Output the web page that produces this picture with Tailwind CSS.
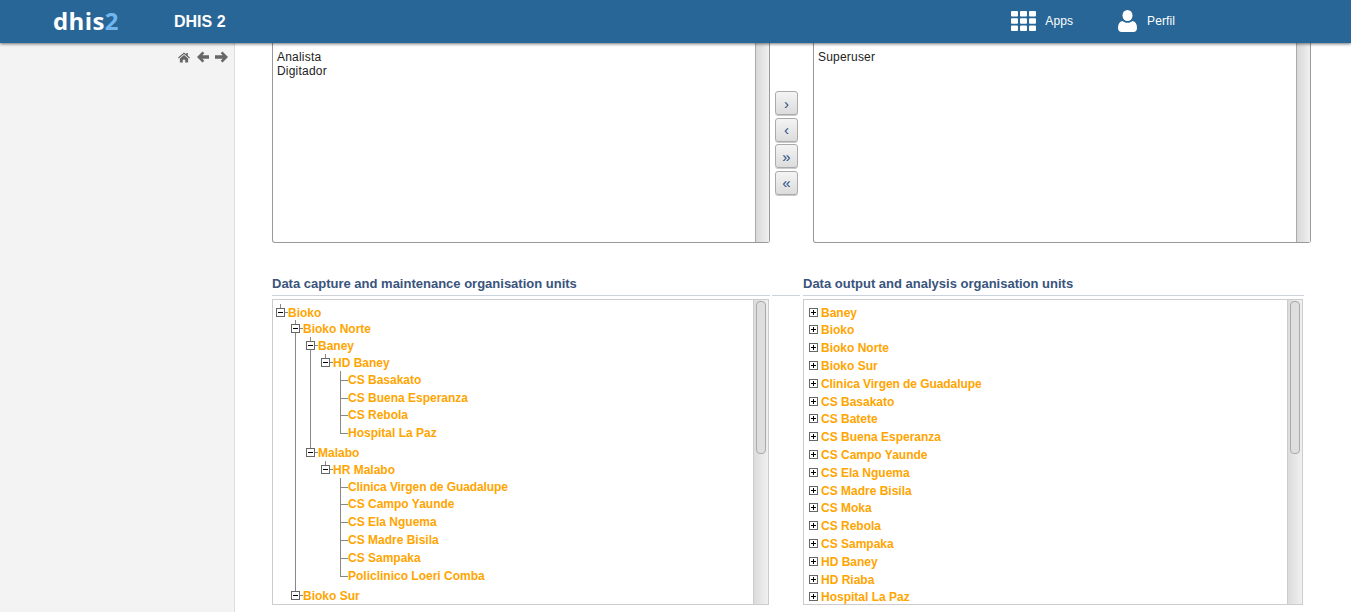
<!DOCTYPE html>
<html lang="en">
<head>
    <meta charset="UTF-8">
    <title>DHIS 2</title>
    <script src="https://cdn.jsdelivr.net/npm/@tailwindcss/browser@4"></script>
</head>
<body class="h-[612px] overflow-hidden bg-white font-['Liberation_Sans',Arial,sans-serif] text-xs text-[#222]">
    <svg class="hidden">
        <symbol id="minus" viewBox="0 0 9 9"><rect x=".5" y=".5" width="8" height="8" fill="#fff" stroke="#666"/><rect x="2" y="4" width="5" height="1" fill="#000"/></symbol>
        <symbol id="plus" viewBox="0 0 9 9"><rect x=".5" y=".5" width="8" height="8" fill="#fff" stroke="#666"/><rect x="2" y="4" width="5" height="1" fill="#000"/><rect x="4" y="2" width="1" height="5" fill="#000"/></symbol>
    </svg>

    <!-- Header -->
    <header class="relative z-10 flex h-[43px] items-center bg-[#276696] pl-[53px] pr-[176px] text-white shadow-[0_1px_3px_rgba(0,0,0,0.55)]">
        <div class="w-[121px] -mt-[1px] font-['Open_Sans',sans-serif] text-[24px] font-bold leading-none tracking-[0.4px]">dhis<span class="text-[#6fb5ee]">2</span></div>
        <div class="text-base font-bold">DHIS 2</div>
        <div class="ml-auto -mt-[2px] flex items-center">
            <svg class="mr-[9px]" width="25" height="20" viewBox="0 0 25 20" fill="#fff">
                <rect x="0" y="0" width="7" height="5.500" rx="1"/><rect x="9" y="0" width="7" height="5.500" rx="1"/><rect x="18" y="0" width="7" height="5.500" rx="1"/>
                <rect x="0" y="7.250" width="7" height="5.500" rx="1"/><rect x="9" y="7.250" width="7" height="5.500" rx="1"/><rect x="18" y="7.250" width="7" height="5.500" rx="1"/>
                <rect x="0" y="14.500" width="7" height="5.500" rx="1"/><rect x="9" y="14.500" width="7" height="5.500" rx="1"/><rect x="18" y="14.500" width="7" height="5.500" rx="1"/>
            </svg>
            <span class="tracking-[0.1px]">Apps</span>
            <svg class="ml-[45px] mr-[10px]" width="19" height="22" viewBox="0 0 19 22" fill="#fff">
                <ellipse cx="9.500" cy="5.500" rx="5" ry="5.500"/>
                <path d="M0 18c0-4 1.500-6.500 4.500-7 1.300 1.200 3 1.800 5 1.800s3.700-.6 5-1.800c3 .5 4.500 3 4.500 7 0 2.500-1.500 4-3.500 4h-12c-2 0-3.500-1.500-3.500-4z"/>
            </svg>
            <span class="tracking-[0.1px]">Perfil</span>
        </div>
    </header>

    <div class="flex h-[569px]">
        <!-- Sidebar -->
        <aside class="w-[235px] shrink-0 border-r border-[#ddd] bg-[#f3f3f3]">
            <div class="flex items-center justify-end pr-[6px] pt-[8px]">
                <svg width="12" height="11" viewBox="0 0 13 12" fill="#666"><path d="M6.500 0.500 0 6l.8 1L6.500 2.200 12.200 7l.8-1-2.300-2V1H9v1.500z"/><path d="M2 7.200 6.500 3.400 11 7.200V11.500H7.800V8.500H5.200V11.500H2z"/></svg>
                <svg class="ml-[7px]" width="12" height="12" viewBox="0 0 12 12" fill="#666"><path d="M5.500.5 7.300 2.300 5.300 4.300H12v3.400H5.300l2 2-1.800 1.800L0 6z"/></svg>
                <svg class="ml-[6px]" width="13" height="12" viewBox="0 0 13 12" fill="#666"><path d="M7.500.5 5.700 2.300l2 2H0v3.400h7.700l-2 2 1.800 1.800L13 6z"/></svg>
            </div>
        </aside>

        <main class="min-w-0 flex-1 pl-[37px]">
            <!-- Role lists -->
            <div class="flex items-start">
                <div class="flex h-[200px] w-[498px] rounded-b-[3px] border-x border-b border-[#999]">
                    <div class="flex-1 px-[4px] pt-[7px] leading-[14px] tracking-[0.2px]">
                        <div>Analista</div>
                        <div>Digitador</div>
                    </div>
                    <div class="w-[14px] border-l border-[#aaa] bg-gradient-to-r from-[#d8d8d8] to-[#f0f0f0]"></div>
                </div>
                <div class="ml-[5px] flex w-[23px] flex-col gap-[2.500px] pt-[48px]">
                    <button class="h-[24px] rounded-[3px] border border-[#aaa] bg-gradient-to-b from-[#f4f4f4] to-[#dcdcdc] text-[15px] leading-none text-[#2a4d80] shadow-[0_1px_0_#ccc]">›</button>
                    <button class="h-[24px] rounded-[3px] border border-[#aaa] bg-gradient-to-b from-[#f4f4f4] to-[#dcdcdc] text-[15px] leading-none text-[#2a4d80] shadow-[0_1px_0_#ccc]">‹</button>
                    <button class="h-[24px] rounded-[3px] border border-[#aaa] bg-gradient-to-b from-[#f4f4f4] to-[#dcdcdc] text-[15px] leading-none text-[#2a4d80] shadow-[0_1px_0_#ccc]">»</button>
                    <button class="h-[24px] rounded-[3px] border border-[#aaa] bg-gradient-to-b from-[#f4f4f4] to-[#dcdcdc] text-[15px] leading-none text-[#2a4d80] shadow-[0_1px_0_#ccc]">«</button>
                </div>
                <div class="ml-[15px] flex h-[200px] w-[498px] rounded-b-[3px] border-x border-b border-[#999]">
                    <div class="flex-1 px-[4px] pt-[7px] leading-[14px] tracking-[0.2px]">Superuser</div>
                    <div class="w-[14px] border-l border-[#aaa] bg-gradient-to-r from-[#d8d8d8] to-[#f0f0f0]"></div>
                </div>
            </div>

            <!-- Organisation unit trees -->
            <div class="mt-[33px] flex items-start">
                <section class="w-[498px]">
                    <h3 class="h-[20px] border-b border-[#ccd3dd] text-[13px] font-bold leading-[16px] text-[#39547d]">Data capture and maintenance organisation units</h3>
                    <div class="mt-[3px] flex h-[306px] w-[497px] border border-[#ccc]">
                        <div class="min-w-0 flex-1 overflow-hidden pl-[3px] pt-[4px] text-xs font-bold leading-[18px] text-[#ffa500]">
                            <ul class="relative">
                                <i class="absolute left-[4px] top-0 h-[5px] w-px bg-[#888]"></i>
                                <li class="flex h-[16px]"><svg class="relative mt-[4px] size-[9px]"><use href="#minus"/></svg><i class="mt-[8px] h-px w-[3px] bg-[#888]"></i>Bioko</li>
                                <li>
                                    <ul class="relative ml-[15px]">
                                        <i class="absolute left-[4px] top-0 h-[271px] w-px bg-[#888]"></i>
                                        <li class="flex h-[17px]"><svg class="relative mt-[4px] size-[9px]"><use href="#minus"/></svg><i class="mt-[8px] h-px w-[3px] bg-[#888]"></i>Bioko Norte</li>
                                        <li>
                                            <ul class="relative ml-[15px]">
                                                <i class="absolute left-[4px] top-0 h-[112px] w-px bg-[#888]"></i>
                                                <li class="flex h-[17px]"><svg class="relative mt-[4px] size-[9px]"><use href="#minus"/></svg><i class="mt-[8px] h-px w-[3px] bg-[#888]"></i>Baney</li>
                                                <li>
                                                    <ul class="relative ml-[15px]">
                                                        <i class="absolute left-[4px] top-0 h-[5px] w-px bg-[#888]"></i>
                                                        <li class="flex h-[17px]"><svg class="relative mt-[4px] size-[9px]"><use href="#minus"/></svg><i class="mt-[8px] h-px w-[3px] bg-[#888]"></i>HD Baney</li>
                                                        <li>
                                                            <ul class="relative ml-[15px] pl-[4px]">
                                                                <i class="absolute left-[4px] top-0 h-[62px] w-px bg-[#888]"></i>
                                                                <li class="flex h-[18px]"><i class="mt-[9px] h-px w-[8px] bg-[#888]"></i>CS Basakato</li>
                                                                <li class="flex h-[17px]"><i class="mt-[9px] h-px w-[8px] bg-[#888]"></i>CS Buena Esperanza</li>
                                                                <li class="flex h-[18px]"><i class="mt-[9px] h-px w-[8px] bg-[#888]"></i>CS Rebola</li>
                                                                <li class="flex h-[20px]"><i class="mt-[9px] h-px w-[8px] bg-[#888]"></i>Hospital La Paz</li>
                                                            </ul>
                                                        </li>
                                                    </ul>
                                                </li>
                                                <li class="flex h-[17px]"><svg class="relative mt-[4px] size-[9px]"><use href="#minus"/></svg><i class="mt-[8px] h-px w-[3px] bg-[#888]"></i>Malabo</li>
                                                <li>
                                                    <ul class="relative ml-[15px]">
                                                        <i class="absolute left-[4px] top-0 h-[5px] w-px bg-[#888]"></i>
                                                        <li class="flex h-[17px]"><svg class="relative mt-[4px] size-[9px]"><use href="#minus"/></svg><i class="mt-[8px] h-px w-[3px] bg-[#888]"></i>HR Malabo</li>
                                                        <li>
                                                            <ul class="relative ml-[15px] pl-[4px]">
                                                                <i class="absolute left-[4px] top-0 h-[99px] w-px bg-[#888]"></i>
                                                                <li class="flex h-[17px] tracking-[-0.1px]"><i class="mt-[9px] h-px w-[8px] bg-[#888]"></i>Clinica Virgen de Guadalupe</li>
                                                                <li class="flex h-[18px]"><i class="mt-[9px] h-px w-[8px] bg-[#888]"></i>CS Campo Yaunde</li>
                                                                <li class="flex h-[18px]"><i class="mt-[9px] h-px w-[8px] bg-[#888]"></i>CS Ela Nguema</li>
                                                                <li class="flex h-[18px]"><i class="mt-[9px] h-px w-[8px] bg-[#888]"></i>CS Madre Bisila</li>
                                                                <li class="flex h-[18px]"><i class="mt-[9px] h-px w-[8px] bg-[#888]"></i>CS Sampaka</li>
                                                                <li class="flex h-[20px]"><i class="mt-[9px] h-px w-[8px] bg-[#888]"></i>Policlinico Loeri Comba</li>
                                                            </ul>
                                                        </li>
                                                    </ul>
                                                </li>
                                            </ul>
                                        </li>
                                        <li class="flex h-[18px]"><svg class="relative mt-[4px] size-[9px]"><use href="#minus"/></svg><i class="mt-[8px] h-px w-[3px] bg-[#888]"></i>Bioko Sur</li>
                                    </ul>
                                </li>
                            </ul>
                        </div>
                        <div class="w-[15px] border-l border-[#ccc] bg-gradient-to-r from-[#dcdcdc] to-[#f0f0f0] px-[2px] pt-px">
                            <div class="h-[153px] rounded-[4px] border border-[#aaa] bg-[#dedede]"></div>
                        </div>
                    </div>
                </section>

                <div class="ml-[2px] h-[20px] w-[28px] border-b border-[#ccd3dd]"></div>

                <section class="ml-[3px] w-[501px]">
                    <h3 class="h-[20px] border-b border-[#ccd3dd] text-[13px] font-bold leading-[16px] text-[#39547d]">Data output and analysis organisation units</h3>
                    <div class="mt-[3px] flex h-[306px] w-[500px] border border-[#ccc]">
                        <ul class="min-w-0 flex-1 overflow-hidden pl-[5px] pt-[4px] text-xs font-bold leading-[18px] text-[#ffa500]">
                            <li class="flex h-[17px] gap-[3px]"><svg class="mt-[4px] size-[9px] shrink-0"><use href="#plus"/></svg>Baney</li>
                            <li class="flex h-[18px] gap-[3px]"><svg class="mt-[4px] size-[9px] shrink-0"><use href="#plus"/></svg>Bioko</li>
                            <li class="flex h-[18px] gap-[3px]"><svg class="mt-[4px] size-[9px] shrink-0"><use href="#plus"/></svg>Bioko Norte</li>
                            <li class="flex h-[18px] gap-[3px]"><svg class="mt-[4px] size-[9px] shrink-0"><use href="#plus"/></svg>Bioko Sur</li>
                            <li class="flex h-[18px] gap-[3px] tracking-[-0.07px]"><svg class="mt-[4px] size-[9px] shrink-0"><use href="#plus"/></svg>Clinica Virgen de Guadalupe</li>
                            <li class="flex h-[17px] gap-[3px]"><svg class="mt-[4px] size-[9px] shrink-0"><use href="#plus"/></svg>CS Basakato</li>
                            <li class="flex h-[18px] gap-[3px]"><svg class="mt-[4px] size-[9px] shrink-0"><use href="#plus"/></svg>CS Batete</li>
                            <li class="flex h-[18px] gap-[3px]"><svg class="mt-[4px] size-[9px] shrink-0"><use href="#plus"/></svg>CS Buena Esperanza</li>
                            <li class="flex h-[18px] gap-[3px]"><svg class="mt-[4px] size-[9px] shrink-0"><use href="#plus"/></svg>CS Campo Yaunde</li>
                            <li class="flex h-[18px] gap-[3px]"><svg class="mt-[4px] size-[9px] shrink-0"><use href="#plus"/></svg>CS Ela Nguema</li>
                            <li class="flex h-[17px] gap-[3px]"><svg class="mt-[4px] size-[9px] shrink-0"><use href="#plus"/></svg>CS Madre Bisila</li>
                            <li class="flex h-[18px] gap-[3px]"><svg class="mt-[4px] size-[9px] shrink-0"><use href="#plus"/></svg>CS Moka</li>
                            <li class="flex h-[18px] gap-[3px]"><svg class="mt-[4px] size-[9px] shrink-0"><use href="#plus"/></svg>CS Rebola</li>
                            <li class="flex h-[18px] gap-[3px]"><svg class="mt-[4px] size-[9px] shrink-0"><use href="#plus"/></svg>CS Sampaka</li>
                            <li class="flex h-[18px] gap-[3px]"><svg class="mt-[4px] size-[9px] shrink-0"><use href="#plus"/></svg>HD Baney</li>
                            <li class="flex h-[17px] gap-[3px]"><svg class="mt-[4px] size-[9px] shrink-0"><use href="#plus"/></svg>HD Riaba</li>
                            <li class="flex h-[18px] gap-[3px]"><svg class="mt-[4px] size-[9px] shrink-0"><use href="#plus"/></svg>Hospital La Paz</li>
                        </ul>
                        <div class="w-[15px] border-l border-[#ccc] bg-gradient-to-r from-[#dcdcdc] to-[#f0f0f0] px-[2px] pt-px">
                            <div class="h-[153px] rounded-[4px] border border-[#aaa] bg-[#dedede]"></div>
                        </div>
                    </div>
                </section>
            </div>
        </main>
    </div>
</body>
</html>
